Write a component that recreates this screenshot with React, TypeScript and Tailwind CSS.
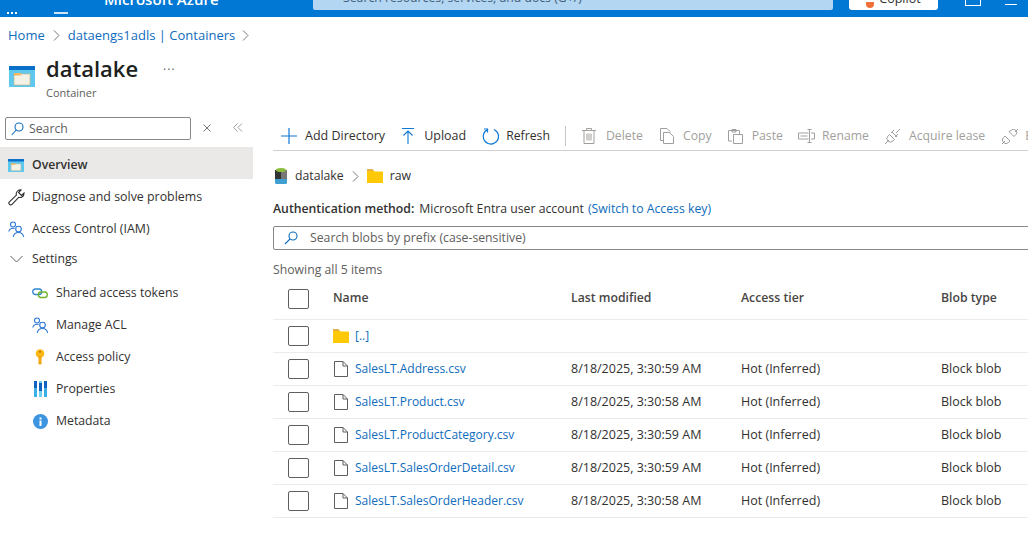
import React from "react";

const ContainerIcon = ({ w = 26, h = 21 }: { w?: number; h?: number }) => (
  <svg width={w} height={h} viewBox="0 0 26 21">
    <rect x="0" y="0" width="26" height="21" fill="#5ec8ee" />
    <rect x="0" y="0" width="26" height="4" fill="#0a6fc9" />
    <rect x="5" y="8" width="16" height="11" fill="#f4f1e6" stroke="#c9b78a" strokeWidth="0.7" />
    <rect x="5" y="7" width="7" height="2.500" fill="#f0b860" />
  </svg>
);
const People = () => (
  <svg width="17" height="17" viewBox="0 0 17 17" fill="none" stroke="#2b77d6" strokeWidth="1.100">
    <circle cx="5" cy="3.500" r="2.500" />
    <path d="M.8 10.500c.6-2 2-3.200 4.200-3.200 .6 0 1.100 .1 1.600 .3" />
    <circle cx="10.500" cy="8" r="2.800" />
    <path d="M5.300 16c.4-2.600 2.500-4.500 5.200-4.500s4.700 1.900 5.200 4.500" />
  </svg>
);
const Folder = ({ w = 16, h = 14 }: { w?: number; h?: number }) => (
  <svg width={w} height={h} viewBox="0 0 16 14">
    <path d="M0 1h6l1.500 1.500H16V14H0z" fill="#ffc907" />
    <path d="M0 0h5.500l1.500 2H0z" fill="#e8b04a" />
  </svg>
);
const FileIcon = () => (
  <svg width="14" height="16" viewBox="0 0 14 16" fill="none" stroke="#605e5c" strokeWidth="1">
    <path d="M.5.500h8.500l4.500 4.500v10.500H.5z" fill="#fff" />
    <path d="M9 .5v4.500h4.500" />
  </svg>
);
const NavRow = ({ icon, label, cls }: { icon: React.ReactNode; label: string; cls: string }) => (
  <div className={`flex items-center pt-[4px] ${cls}`}>
    <span className="flex w-[24px] justify-center">{icon}</span>
    <span className="ml-[4px]">{label}</span>
  </div>
);
const Tool = ({ icon, label, cls, off }: { icon: React.ReactNode; label: string; cls: string; off?: boolean }) => (
  <div className={`flex shrink-0 items-center ${cls} ${off ? "text-[#a19f9d]" : "text-[#323130]"}`}>
    {icon}
    <span>{label}</span>
  </div>
);
const rows = [
  ["SalesLT.Address.csv", "8/18/2025, 3:30:59 AM"],
  ["SalesLT.Product.csv", "8/18/2025, 3:30:58 AM"],
  ["SalesLT.ProductCategory.csv", "8/18/2025, 3:30:59 AM"],
  ["SalesLT.SalesOrderDetail.csv", "8/18/2025, 3:30:59 AM"],
  ["SalesLT.SalesOrderHeader.csv", "8/18/2025, 3:30:58 AM"],
];
const Check = () => <div className="h-[20px] w-[21px] rounded-[2px] border border-[#605e5c] bg-white" />;
const Gray = "#a19f9d";

export default function App() {
  return (
    <div
      className="flex h-[548px] w-[1028px] flex-col overflow-hidden bg-white text-[12.25px] text-[#323130]"
      style={{ fontFamily: '"Open Sans", "Noto Sans", sans-serif' }}
    >
      <header className="relative flex h-[17px] shrink-0 items-end overflow-hidden bg-[#0078d4] text-white">
        <div className="flex h-[5px] w-[104px] shrink-0 pl-[7px]">
          <div className="flex h-[2px] gap-[2px]">
            <i className="h-[2px] w-[2px] bg-white" />
            <i className="h-[2px] w-[2px] bg-white" />
            <i className="h-[2px] w-[2px] bg-white" />
          </div>
          <div className="ml-[37px] h-[2px] w-[14px] bg-[#cfe4f5]" />
        </div>
        <div className="mb-[8px] w-[209px] shrink-0 text-[15px] leading-[20px] font-semibold">Microsoft Azure</div>
        <div className="mb-[7px] flex h-[20px] w-[520px] shrink-0 items-end rounded-b-[2px] bg-[#b3d6f2] pb-[4px] pl-[30px] text-[12.25px] leading-[16px] text-[#44617b]">
          Search resources, services, and docs (G+/)
        </div>
        <div className="mb-[7px] ml-[16px] flex h-[20px] w-[89px] shrink-0 items-end justify-center gap-[5px] rounded-b-[3px] bg-white pb-[4px] text-[12.5px] leading-[14px] text-[#323130]">
          <span className="mb-[-2px] h-[6px] w-[8px] rounded-b-full bg-[#f0703a]" />
          Copilot
        </div>
        <div className="mb-[11px] ml-[27px] h-[6px] w-[16px] border-x border-b border-white" />
        <div className="mb-[12px] ml-[24px] h-[3px] w-[12px] border-b border-white" />
      </header>

      <nav className="flex h-[36px] shrink-0 items-center pt-[1px] pl-[8px] text-[13px] text-[#0f6cbd]">
        <span>Home</span>
        <svg className="mx-[8px]" width="7" height="11" viewBox="0 0 7 11" fill="none" stroke="#797775"><path d="M1 .5l5 5-5 5" /></svg>
        <span>dataengs1adls | Containers</span>
        <svg className="ml-[7px]" width="7" height="11" viewBox="0 0 7 11" fill="none" stroke="#797775"><path d="M1 .5l5 5-5 5" /></svg>
      </nav>

      <div className="flex h-[64px] shrink-0 pl-[9px]">
        <div className="mt-[13px]"><ContainerIcon /></div>
        <div className="ml-[11px]">
          <div className="flex items-center">
            <span className="text-[22px] leading-[30px] font-semibold text-[#201f1e]">datalake</span>
            <span className="mb-[4px] ml-[25px] text-[12px] tracking-[1px] text-[#605e5c]">...</span>
          </div>
          <div className="mt-[2px] text-[11px] leading-[16px] text-[#605e5c]">Container</div>
        </div>
      </div>

      <div className="flex min-h-0 flex-1">
        <aside className="w-[253px] shrink-0">
          <div className="flex h-[30px] items-start pl-[5px]">
            <div className="flex h-[23px] w-[186px] items-center rounded-[2px] border border-[#8a8886] pt-[1px] pl-[5px] text-[#605e5c]">
              <svg width="13" height="14" viewBox="0 0 13 14" fill="none" stroke="#0f6cbd" strokeWidth="1.100"><circle cx="8" cy="5" r="4" /><path d="M5.200 8L.7 13" /></svg>
              <span className="ml-[5px]">Search</span>
            </div>
            <svg className="mt-[7px] ml-[12px]" width="8" height="8" viewBox="0 0 8 8" stroke="#797775"><path d="M.5.500l7 7M7.500.500l-7 7" /></svg>
            <svg className="mt-[6px] ml-[22px]" width="10" height="9" viewBox="0 0 10 9" fill="none" stroke="#a19f9d"><path d="M4.500.5l-4 4 4 4M9 .5l-4 4 4 4" /></svg>
          </div>
          <NavRow cls="h-[32px] bg-[#ebe9e7] pl-[4px] font-semibold" label="Overview" icon={<ContainerIcon w={16} h={13} />} />
          <NavRow
            cls="h-[32px] pl-[4px] text-[12.4px]"
            label="Diagnose and solve problems"
            icon={<svg width="17" height="17" viewBox="0 0 17 17" fill="none" stroke="#323130" strokeWidth="1.100"><path d="M16 4.500a4 4 0 0 1-5.300 3.800L4 15.300a1.800 1.800 0 0 1-2.600-2.500l7-6.700A4 4 0 0 1 13 1L10.500 3.500l3 3L16 4z" /></svg>}
          />
          <NavRow cls="h-[32px] pl-[4px] text-[12.4px]" label="Access Control (IAM)" icon={<People />} />
          <NavRow
            cls="h-[28px] pl-[4px]"
            label="Settings"
            icon={<svg width="13" height="8" viewBox="0 0 13 8" fill="none" stroke="#605e5c"><path d="M.5 1l6 6 6-6" /></svg>}
          />
          <div className="pt-[4px] pl-[28px]">
            <NavRow
              cls="h-[32px]"
              label="Shared access tokens"
              icon={<svg width="16" height="11" viewBox="0 0 16 11" fill="none" strokeWidth="1.300"><rect x=".7" y="1" width="9" height="5.500" rx="2.700" stroke="#2f86d0" /><rect x="6.300" y="4" width="9" height="5.500" rx="2.700" stroke="#6fb32d" /></svg>}
            />
            <NavRow cls="h-[32px]" label="Manage ACL" icon={<People />} />
            <NavRow
              cls="h-[32px]"
              label="Access policy"
              icon={<svg width="10" height="16" viewBox="0 0 10 16"><circle cx="5" cy="4.500" r="4.300" fill="#fcb714" /><path d="M3.500 7h3v7.500L5 16l-1.500-1.500z" fill="#f2a60e" /><rect x="4" y="2" width="2" height="1.500" fill="#a86f00" /></svg>}
            />
            <NavRow
              cls="h-[32px]"
              label="Properties"
              icon={<svg width="13" height="16" viewBox="0 0 13 16"><rect x="0" width="3" height="16" fill="#3bb0e6" /><rect x="5" width="3" height="16" fill="#6fd0f0" /><rect x="10" width="3" height="16" fill="#3bb0e6" /><rect x="5" y="2" width="3" height="8" fill="#0f62c0" /><rect x="0" width="3" height="7" fill="#0f62c0" /><rect x="10" width="3" height="7" fill="#0f62c0" /></svg>}
            />
            <NavRow
              cls="h-[32px]"
              label="Metadata"
              icon={<svg width="15" height="15" viewBox="0 0 15 15"><circle cx="7.500" cy="7.500" r="7.500" fill="#3d94e0" /><rect x="6.500" y="6.500" width="2" height="5.500" fill="#fff" /><rect x="6.500" y="3.500" width="2" height="2" fill="#fff" /></svg>}
            />
          </div>
        </aside>

        <main className="min-w-0 flex-1 overflow-hidden pl-[20px]">
          <div className="flex h-[34px] items-center border-b border-[#d2d0ce] pt-[5px]">
            <Tool cls="ml-[8px] gap-[8px] text-[12.5px]" label="Add Directory" icon={<svg width="16" height="16" viewBox="0 0 16 16" stroke="#0f78d4" strokeWidth="1.200"><path d="M8 0v16M0 8h16" /></svg>} />
            <Tool cls="ml-[16px] gap-[9px] text-[12.5px]" label="Upload" icon={<svg width="14" height="16" viewBox="0 0 14 16" fill="none" stroke="#0f78d4" strokeWidth="1.100"><path d="M1 .5h12M7 3v13M2.500 7.500L7 3l4.500 4.500" /></svg>} />
            <Tool cls="ml-[16px] gap-[7px]" label="Refresh" icon={<svg width="17" height="17" viewBox="0 0 17 17" fill="none" stroke="#0f78d4" strokeWidth="1.200"><path d="M6 1.400A7.600 7.600 0 1 0 12 1.500" /><path d="M5.500 4.500V1H2" /></svg>} />
            <div className="ml-[15px] h-[20px] w-px shrink-0 bg-[#c8c6c4]" />
            <Tool off cls="ml-[16px] gap-[10px]" label="Delete" icon={<svg width="14" height="16" viewBox="0 0 14 16" fill="none" stroke={Gray}><path d="M0 2.500h14M4.500 2.500V.5h5v2M2 2.500v13h10v-13M5 5.500v7M7 5.500v7M9 5.500v7" /></svg>} />
            <Tool off cls="ml-[17px] gap-[9px]" label="Copy" icon={<svg width="14" height="16" viewBox="0 0 14 16" fill="none" stroke={Gray}><path d="M3.500 12.500H.5V.5H7l3 3v1M3.500 4.500h6l4 4v7h-10z" /></svg>} />
            <Tool off cls="ml-[16px] gap-[9px]" label="Paste" icon={<svg width="15" height="16" viewBox="0 0 15 16" fill="none" stroke={Gray}><path d="M4 13H.5V2.500h11V6M4 1.500h4v2.500H4zM5.500 6.500h9v9h-9z" /></svg>} />
            <Tool off cls="ml-[15px] gap-[7px]" label="Rename" icon={<svg width="17" height="14" viewBox="0 0 17 14" fill="none" stroke={Gray}><path d="M10.500 4H.5v6h10M13 4h3.500v6H13M11.500 1v12M9.500.5h4M9.500 13.500h4M2.500 7h7" /></svg>} />
            <Tool off cls="ml-[16px] gap-[9px]" label="Acquire lease" icon={<svg width="15" height="15" viewBox="0 0 15 15" fill="none" stroke={Gray}><path d="M0 15l4-4M11 4l4-4M4.500 5.500l5 5-1.500 1.500a3 3 0 0 1-5-5zM6 4l3-3M10 8l3-3M7 3l5 5" /></svg>} />
            <Tool off cls="ml-[17px] gap-[7px]" label="Break lease" icon={<svg width="16" height="15" viewBox="0 0 16 15" fill="none" stroke={Gray}><path d="M0 15l3-3M13 3l3-3M3 7l5 5-1.500 1.500a3 3 0 0 1-5-5zM9 1.500a2.500 2.500 0 0 1 5 4l-2 2-5-5z" /></svg>} />
          </div>

          <div className="flex h-[50px] items-center pl-[2px]">
            <svg width="12" height="16" viewBox="0 0 12 16">
              <rect y="2" width="12" height="14" rx="1.500" fill="#3f9fd0" />
              <rect y="2" width="6" height="9" fill="#333" />
              <rect x="6" y="2" width="6" height="9" fill="#777" />
              <ellipse cx="6" cy="2" rx="5" ry="2" fill="#8cbc3c" />
            </svg>
            <span className="ml-[8px]">datalake</span>
            <svg className="mx-[8px]" width="7" height="11" viewBox="0 0 7 11" fill="none" stroke="#797775"><path d="M1 .5l5 5-5 5" /></svg>
            <Folder w={16} h={14} />
            <span className="ml-[7px]">raw</span>
          </div>

          <div className="flex h-[16px] items-center">
            <span className="font-semibold">Authentication method:</span>
            <span className="ml-[5px]">Microsoft Entra user account</span>
            <span className="ml-[4px] text-[#0f6cbd]">(Switch to Access key)</span>
          </div>

          <div className="mt-[9px] flex h-[24px] w-[780px] items-center rounded-[2px] border border-[#8a8886] pl-[10px] text-[#605e5c]">
            <svg width="14" height="14" viewBox="0 0 14 14" fill="none" stroke="#0f6cbd" strokeWidth="1.100"><circle cx="9" cy="5" r="4" /><path d="M6 8L1 13" /></svg>
            <span className="ml-[12px]">Search blobs by prefix (case-sensitive)</span>
          </div>

          <div className="flex h-[32px] items-end pb-[3px] text-[#605e5c]">Showing all 5 items</div>

          <div className="flex h-[38px] items-center border-b border-[#edebe9] pb-[4px] font-semibold text-[#484644]">
            <div className="w-[60px] pl-[15px]"><Check /></div>
            <div className="w-[238px]">Name</div>
            <div className="w-[170px]">Last modified</div>
            <div className="w-[200px]">Access tier</div>
            <div>Blob type</div>
          </div>
          <div className="flex h-[33px] items-center border-b border-[#edebe9]">
            <div className="w-[60px] pl-[15px]"><Check /></div>
            <Folder w={16} h={14} />
            <span className="ml-[6px] text-[12px] text-[#0f6cbd]">[..]</span>
          </div>
          {rows.map(([n, d]) => (
            <div key={n} className="flex h-[33px] items-center border-b border-[#edebe9] text-[12.5px]">
              <div className="w-[60px] pl-[15px]"><Check /></div>
              <div className="flex w-[238px] items-center pl-[1px]">
                <FileIcon />
                <span className="ml-[7px] text-[12px] text-[#0f6cbd]">{n}</span>
              </div>
              <div className="w-[170px]">{d}</div>
              <div className="w-[200px]">Hot (Inferred)</div>
              <div>Block blob</div>
            </div>
          ))}
        </main>
      </div>
    </div>
  );
}
